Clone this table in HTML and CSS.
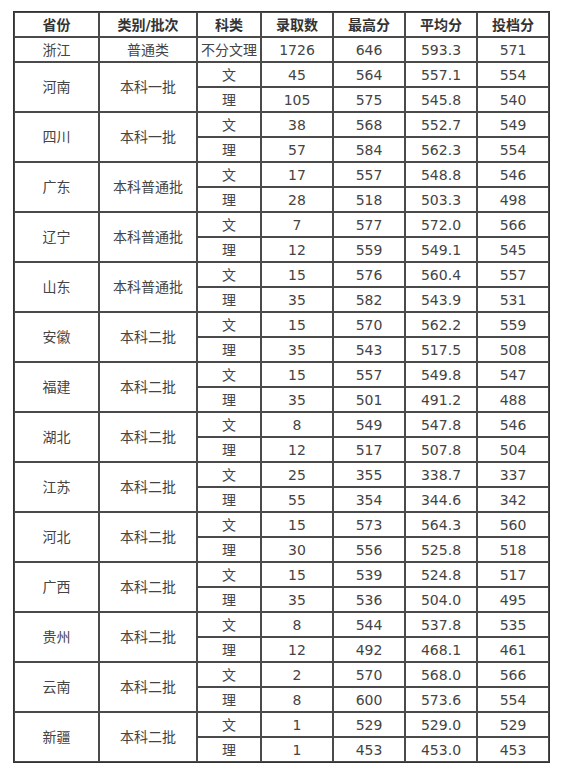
FILE: index.html
```html
<!DOCTYPE html>
<html>
<head>
<meta charset="utf-8">
<link rel="stylesheet" href="styles.css">
</head>
<body>
<table class="score">
<thead>
<tr><th class="c1">省份</th><th class="c2">类别/批次</th><th class="c3">科类</th><th class="c4">录取数</th><th class="c5">最高分</th><th class="c6">平均分</th><th class="c7">投档分</th></tr>
</thead>
<tbody>
<tr><td>浙江</td><td>普通类</td><td>不分文理</td><td>1726</td><td>646</td><td>593.3</td><td>571</td></tr>
<tr><td rowspan="2">河南</td><td rowspan="2">本科一批</td><td>文</td><td>45</td><td>564</td><td>557.1</td><td>554</td></tr>
<tr><td>理</td><td>105</td><td>575</td><td>545.8</td><td>540</td></tr>
<tr><td rowspan="2">四川</td><td rowspan="2">本科一批</td><td>文</td><td>38</td><td>568</td><td>552.7</td><td>549</td></tr>
<tr><td>理</td><td>57</td><td>584</td><td>562.3</td><td>554</td></tr>
<tr><td rowspan="2">广东</td><td rowspan="2">本科普通批</td><td>文</td><td>17</td><td>557</td><td>548.8</td><td>546</td></tr>
<tr><td>理</td><td>28</td><td>518</td><td>503.3</td><td>498</td></tr>
<tr><td rowspan="2">辽宁</td><td rowspan="2">本科普通批</td><td>文</td><td>7</td><td>577</td><td>572.0</td><td>566</td></tr>
<tr><td>理</td><td>12</td><td>559</td><td>549.1</td><td>545</td></tr>
<tr><td rowspan="2">山东</td><td rowspan="2">本科普通批</td><td>文</td><td>15</td><td>576</td><td>560.4</td><td>557</td></tr>
<tr><td>理</td><td>35</td><td>582</td><td>543.9</td><td>531</td></tr>
<tr><td rowspan="2">安徽</td><td rowspan="2">本科二批</td><td>文</td><td>15</td><td>570</td><td>562.2</td><td>559</td></tr>
<tr><td>理</td><td>35</td><td>543</td><td>517.5</td><td>508</td></tr>
<tr><td rowspan="2">福建</td><td rowspan="2">本科二批</td><td>文</td><td>15</td><td>557</td><td>549.8</td><td>547</td></tr>
<tr><td>理</td><td>35</td><td>501</td><td>491.2</td><td>488</td></tr>
<tr><td rowspan="2">湖北</td><td rowspan="2">本科二批</td><td>文</td><td>8</td><td>549</td><td>547.8</td><td>546</td></tr>
<tr><td>理</td><td>12</td><td>517</td><td>507.8</td><td>504</td></tr>
<tr><td rowspan="2">江苏</td><td rowspan="2">本科二批</td><td>文</td><td>25</td><td>355</td><td>338.7</td><td>337</td></tr>
<tr><td>理</td><td>55</td><td>354</td><td>344.6</td><td>342</td></tr>
<tr><td rowspan="2">河北</td><td rowspan="2">本科二批</td><td>文</td><td>15</td><td>573</td><td>564.3</td><td>560</td></tr>
<tr><td>理</td><td>30</td><td>556</td><td>525.8</td><td>518</td></tr>
<tr><td rowspan="2">广西</td><td rowspan="2">本科二批</td><td>文</td><td>15</td><td>539</td><td>524.8</td><td>517</td></tr>
<tr><td>理</td><td>35</td><td>536</td><td>504.0</td><td>495</td></tr>
<tr><td rowspan="2">贵州</td><td rowspan="2">本科二批</td><td>文</td><td>8</td><td>544</td><td>537.8</td><td>535</td></tr>
<tr><td>理</td><td>12</td><td>492</td><td>468.1</td><td>461</td></tr>
<tr><td rowspan="2">云南</td><td rowspan="2">本科二批</td><td>文</td><td>2</td><td>570</td><td>568.0</td><td>566</td></tr>
<tr><td>理</td><td>8</td><td>600</td><td>573.6</td><td>554</td></tr>
<tr><td rowspan="2">新疆</td><td rowspan="2">本科二批</td><td>文</td><td>1</td><td>529</td><td>529.0</td><td>529</td></tr>
<tr><td>理</td><td>1</td><td>453</td><td>453.0</td><td>453</td></tr>
</tbody>
</table>
</body>
</html>
```
FILE: styles.css
```css
html, body {
  margin: 0;
  padding: 0;
  background: #fff;
}
body {
  padding: 11px 0 0 13px;
  font-family: "DejaVu Sans", "Noto Sans CJK SC", sans-serif;
  font-size: 14px;
  color: #444;
}
.score {
  border-collapse: separate;
  border-spacing: 0;
  border: 1px solid #333;
  table-layout: fixed;
  width: 537px;
}
.score th,
.score td {
  box-sizing: border-box;
  border: 1px solid #4a4a4a;
  padding: 0;
  height: 25px;
  line-height: 22px;
  text-align: center;
  vertical-align: middle;
  white-space: nowrap;
  overflow: hidden;
}
.score th {
  font-weight: bold;
  color: #333;
}
.c1 { width: 85px; }
.c2 { width: 98px; }
.c3 { width: 64px; }
.c4, .c5, .c6, .c7 { width: 72px; }
```
